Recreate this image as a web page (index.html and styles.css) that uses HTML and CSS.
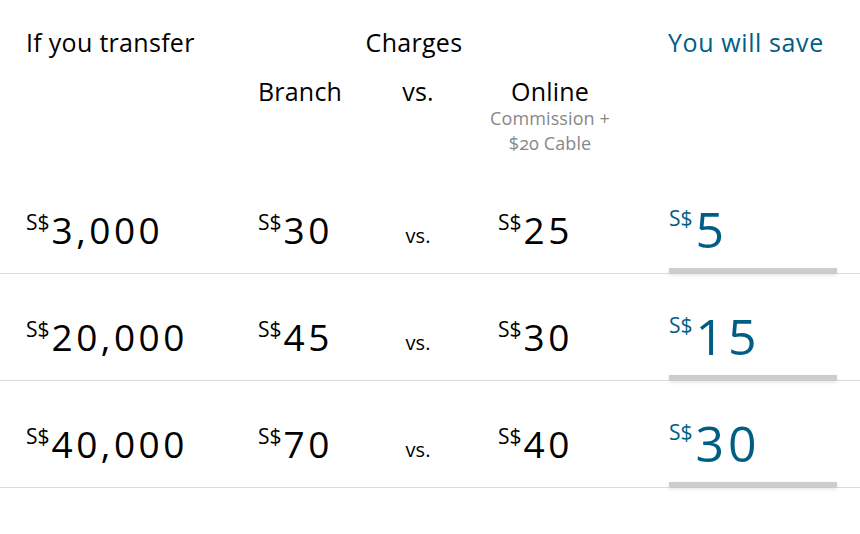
FILE: index.html
```html
<!DOCTYPE html>
<html>
<head>
<meta charset="utf-8">
<link rel="stylesheet" href="styles.css">
</head>
<body>
<div class="table">
  <div class="head">
    <div class="h1 c1">If you transfer</div>
    <div class="h1 c3 charges">Charges</div>
    <div class="h1 c5 save">You will save</div>
    <div class="h2 c2">Branch</div>
    <div class="h2 c3 vs-h">vs.</div>
    <div class="h2 c4">
      <div class="online">
        <div>Online</div>
        <div class="sub">Commission +<br><span class="old">$20</span> Cable</div>
      </div>
    </div>
  </div>

  <div class="row">
    <div class="amt c1"><sup>S$</sup>3,000</div>
    <div class="amt c2"><sup>S$</sup>30</div>
    <div class="vs c3">vs.</div>
    <div class="amt c4"><sup>S$</sup>25</div>
    <div class="savecell c5"><div class="big"><sup>S$</sup>5</div><div class="bar"></div></div>
  </div>
  <div class="row">
    <div class="amt c1"><sup>S$</sup>20,000</div>
    <div class="amt c2"><sup>S$</sup>45</div>
    <div class="vs c3">vs.</div>
    <div class="amt c4"><sup>S$</sup>30</div>
    <div class="savecell c5"><div class="big"><sup>S$</sup>15</div><div class="bar"></div></div>
  </div>
  <div class="row">
    <div class="amt c1"><sup>S$</sup>40,000</div>
    <div class="amt c2"><sup>S$</sup>70</div>
    <div class="vs c3">vs.</div>
    <div class="amt c4"><sup>S$</sup>40</div>
    <div class="savecell c5"><div class="big"><sup>S$</sup>30</div><div class="bar"></div></div>
  </div>
</div>
</body>
</html>
```

FILE: styles.css
```css
* { box-sizing: border-box; margin: 0; padding: 0; }
html, body { background: #fff; }
body {
  font-family: "Open Sans", "Noto Sans", sans-serif;
  color: #000;
  width: 860px;
  height: 534px;
  overflow: hidden;
}
.table { padding-top: 24px; }
.head, .row {
  display: grid;
  grid-template-columns: 26px 232px 130px 60px 221px 168px 23px;
}
.c1 { grid-column: 2; }
.c2 { grid-column: 3; }
.c3 { grid-column: 4; }
.c4 { grid-column: 5; }
.c5 { grid-column: 6; }

.head { height: 143px; grid-template-rows: 40px auto; }
.h1 { grid-row: 1; font-size: 25px; letter-spacing: 0.3px; line-height: 36px; }
.h2 { grid-row: 2; font-size: 25px; letter-spacing: 0.2px; line-height: 36px; margin-top: 9px; }
.charges { justify-self: center; white-space: nowrap; margin-left: -8px; }
.vs-h { justify-self: center; }
.save { color: #005e85; white-space: nowrap; margin-left: -1px; letter-spacing: 0.6px; }
.online { width: 122px; margin-left: 41px; text-align: center; }
.sub { color: #888; font-size: 18px; letter-spacing: 0.1px; line-height: 25px; margin-top: -3px; }
.old { font-variant-numeric: oldstyle-nums; }

.row { height: 107px; border-bottom: 1px solid #dcdcdc; }
.amt {
  font-size: 37px;
  letter-spacing: 3.5px;
  line-height: 44px;
  padding-top: 41px;
  white-space: nowrap;
}
.c4.amt { padding-left: 50px; }
sup {
  font-size: 21px;
  letter-spacing: 0;
  vertical-align: top;
  line-height: 1;
  position: relative;
  top: 4px;
  margin-right: 2px;
}
.vs { font-size: 20px; justify-self: center; padding-top: 55px; line-height: 28px; }
.savecell {
  display: flex;
  flex-direction: column;
  justify-content: space-between;
  color: #005e85;
}
.big {
  font-size: 50px;
  line-height: 60px;
  letter-spacing: 4px;
  padding-top: 32px;
  white-space: nowrap;
}
.big sup { top: 9px; margin-right: 3px; }
.bar {
  height: 5px;
  background: #cdcdcd;
  box-shadow: 0 2px 4px rgba(0,0,0,0.12);
}
```
